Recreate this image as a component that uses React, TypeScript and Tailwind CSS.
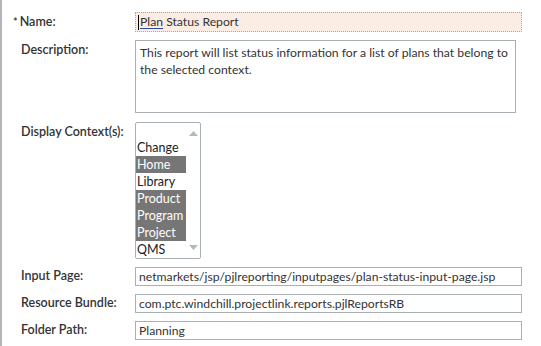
import React from 'react';

const contexts = [
  { name: '', selected: false },
  { name: 'Change', selected: false },
  { name: 'Home', selected: true },
  { name: 'Library', selected: false },
  { name: 'Product', selected: true },
  { name: 'Program', selected: true },
  { name: 'Project', selected: true },
  { name: 'QMS', selected: false },
];

function Label({ children, required }: { children: React.ReactNode; required?: boolean }) {
  return (
    <div className="w-[114px] shrink-0 text-[12.5px] font-semibold text-[#333]">
      {required && <span className="-ml-[8px] mr-[2px] text-[11px]">*</span>}
      {children}
    </div>
  );
}

function TextField({ value }: { value: string }) {
  return (
    <div className="flex h-[19px] w-[387px] items-center overflow-hidden whitespace-nowrap border border-[#a9b0b3] bg-white px-[3px] pt-[1px] text-[12.2px] leading-none text-[#333]">
      {value}
    </div>
  );
}

export default function App() {
  return (
    <div className="h-[346px] w-[541px] border-l-2 border-[#b4b4b4] bg-white pl-[19px] pt-[12px] font-['Lato',sans-serif]">
      <div className="flex flex-col">
        <div className="flex items-center">
          <Label required>Name:</Label>
          <div className="relative flex h-[20px] w-[387px] items-center border border-dotted border-[#a8a8a8] bg-[#fbede4] px-[2px] text-[12.2px] text-[#333]">
            <span className="mr-[1px] h-[15px] w-px bg-black" />
            <span className="underline decoration-[#2e4a9c] underline-offset-2">Plan</span>
            <span>&nbsp;Status Report</span>
          </div>
        </div>

        <div className="mt-[8px] flex items-start">
          <Label>
            <div className="pt-[1px]">Description:</div>
          </Label>
          <div className="h-[73px] w-[381px] border border-[#a9b0b3] bg-white px-[4px] pt-[3px] text-[12.2px] leading-[17px] text-[#333]">
            This report will list status information for a list of plans that belong to the selected context.
          </div>
        </div>

        <div className="mt-[9px] flex items-start">
          <Label>
            <div className="pt-[1px]">Display Context(s):</div>
          </Label>
          <div className="relative flex h-[137px] w-[66px] rounded-[2px] border border-[#a9b0b3] bg-white">
            <div className="flex w-[50px] flex-col pt-[1px]">
              {contexts.map((c, i) => (
                <div
                  key={i}
                  className={`h-[17px] whitespace-nowrap pl-[1px] text-[12.5px] leading-[17px] ${
                    c.selected ? 'bg-[#767676] text-white' : 'text-[#222]'
                  }`}
                >
                  {c.name}
                </div>
              ))}
            </div>
            <div className="flex flex-1 flex-col items-center justify-between py-[8px]">
              <svg width="9" height="5" viewBox="0 0 9 5">
                <polygon points="0,5 4.5,0 9,5" fill="#b8b8b8" />
              </svg>
              <svg width="9" height="5" viewBox="0 0 9 5">
                <polygon points="0,0 9,0 4.5,5" fill="#b8b8b8" />
              </svg>
            </div>
          </div>
        </div>

        <div className="mt-[8px] flex items-center">
          <Label>Input Page:</Label>
          <TextField value="netmarkets/jsp/pjlreporting/inputpages/plan-status-input-page.jsp" />
        </div>

        <div className="mt-[8px] flex items-center">
          <Label>Resource Bundle:</Label>
          <TextField value="com.ptc.windchill.projectlink.reports.pjlReportsRB" />
        </div>

        <div className="mt-[8px] flex items-center">
          <Label>Folder Path:</Label>
          <TextField value="Planning" />
        </div>
      </div>
    </div>
  );
}
